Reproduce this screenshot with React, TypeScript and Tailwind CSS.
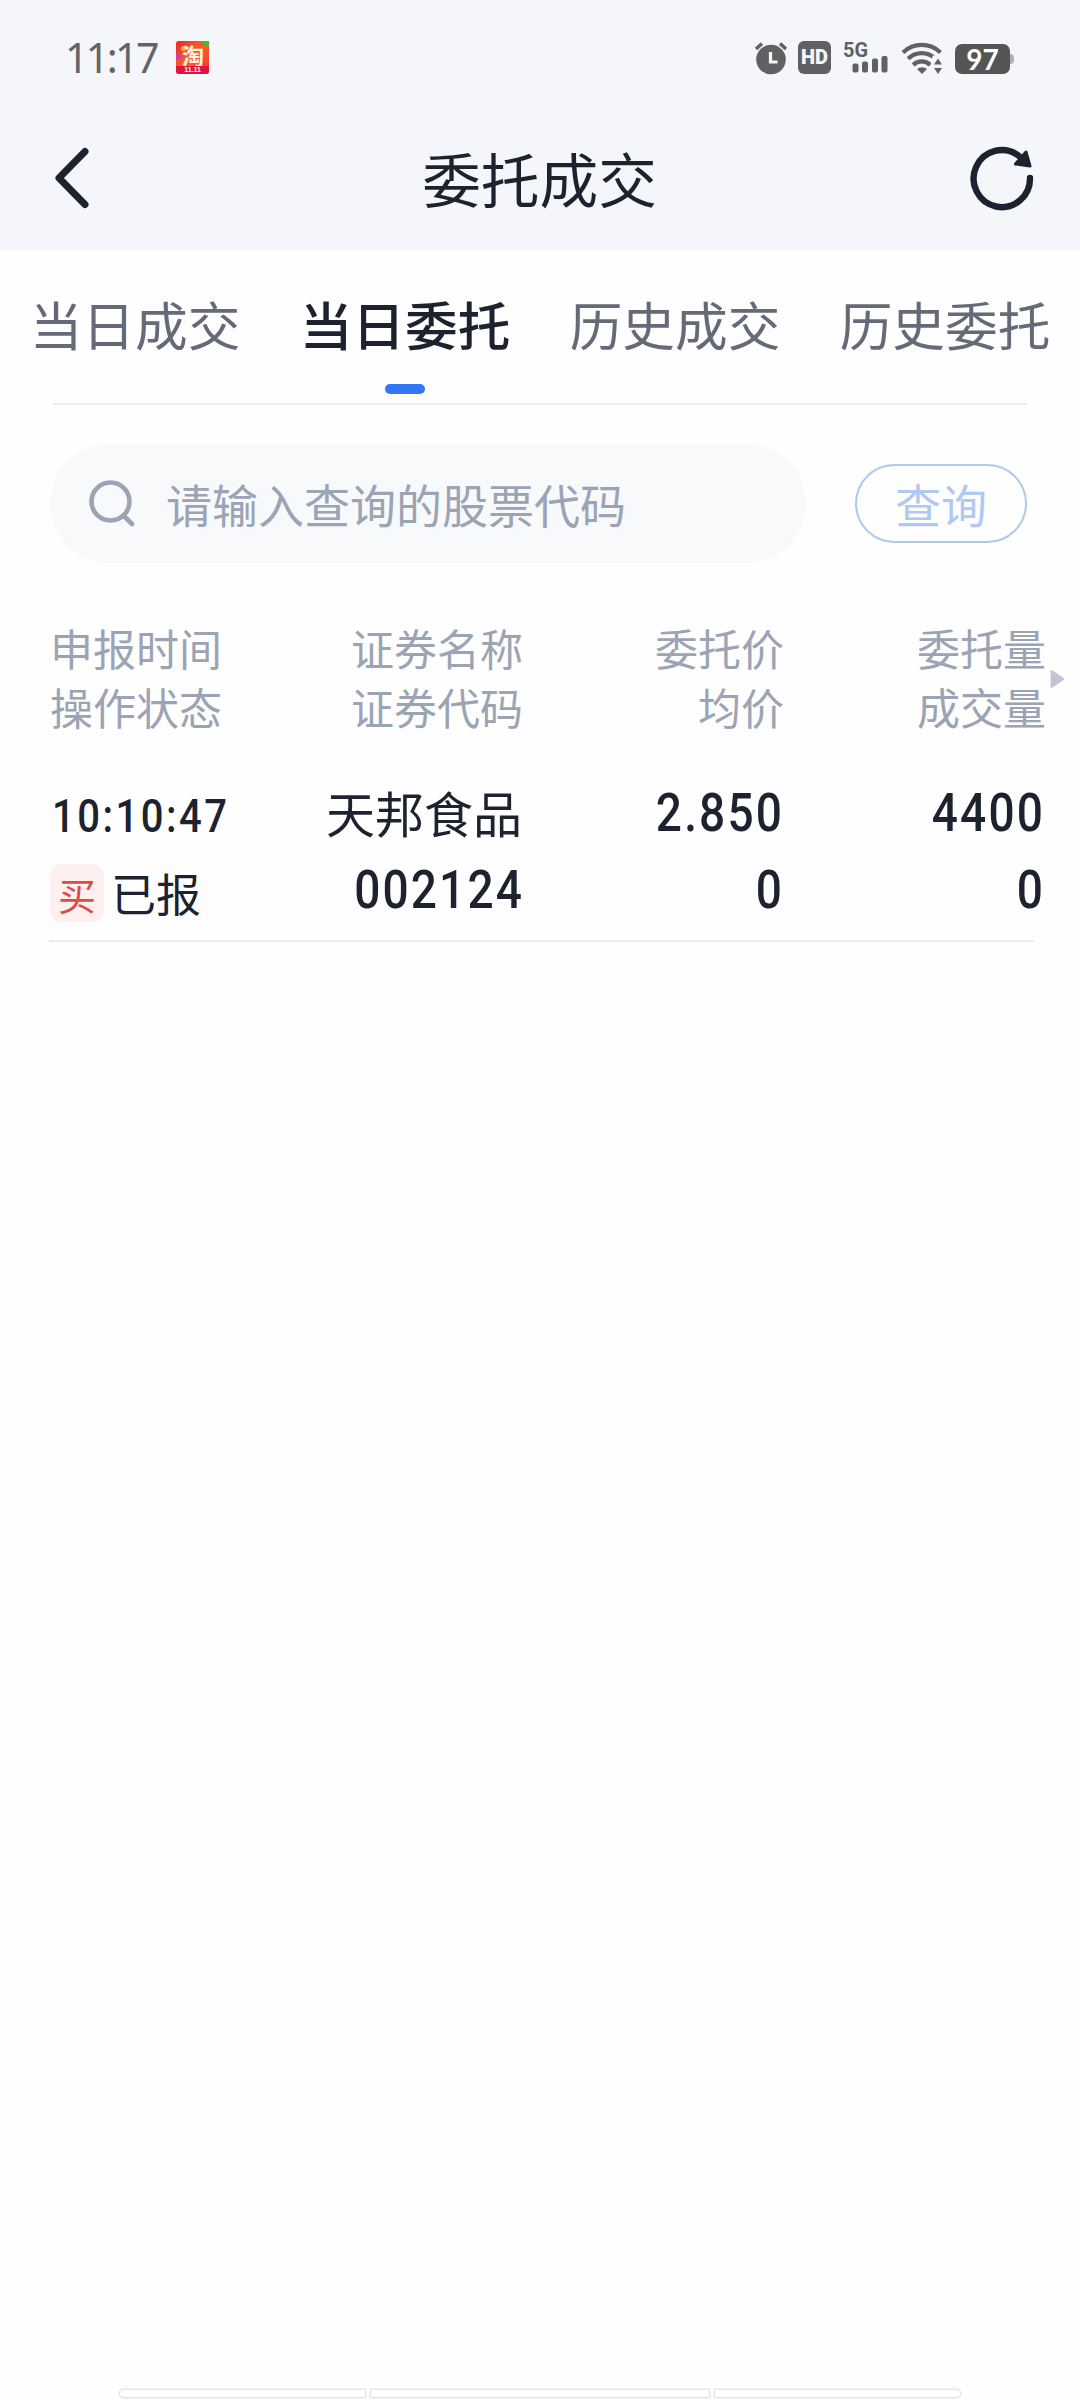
import clsx from "clsx";

const tabs = ["当日成交", "当日委托", "历史成交", "历史委托"];
const activeTab = "当日委托";

const columns = [
  ["申报时间", "操作状态"],
  ["证券名称", "证券代码"],
  ["委托价", "均价"],
  ["委托量", "成交量"],
];

const order = {
  time: "10:10:47",
  side: "买",
  status: "已报",
  name: "天邦食品",
  code: "002124",
  price: "2.850",
  avgPrice: "0",
  volume: "4400",
  filled: "0",
};

function AppBadge() {
  return (
    <div className="relative h-[33px] w-[33px] rounded-[3px] bg-linear-to-br from-[#e8202c] via-[#f8622a] to-[#f0203c]">
      <span className="absolute top-0 right-0 h-[5px] w-[7px] rounded-tr-[3px] rounded-bl-full bg-[#2fc22c]" />
      <span className="absolute top-[13px] left-0 h-[5px] w-[5px] rounded-full bg-[#c93bd8]" />
      <span className="absolute top-[5px] left-[5px] h-[5px] w-[5px] rounded-full bg-[#ffb02e]" />
      <span className="absolute top-[2px] left-[6px] text-[22px] leading-[22px] font-bold text-[#fff6e0]">淘</span>
      <span className="absolute bottom-0 left-0 h-[8px] w-full rounded-b-[3px] bg-[#e0123f] text-center font-['Liberation_Sans'] text-[7px] leading-[8px] font-bold text-white">
        11.11
      </span>
    </div>
  );
}

function AlarmIcon() {
  return (
    <svg width="34" height="34" viewBox="0 0 34 34" fill="none">
      <circle cx="17" cy="18.500" r="14.800" fill="#606163" />
      <path d="M2 8 8 2.500M32 8 26 2.500" stroke="#606163" strokeWidth="3.600" />
      <path d="M16.500 11v10h7" stroke="#f4f6fa" strokeWidth="3.200" />
    </svg>
  );
}

function SignalIcon() {
  return (
    <svg className="overflow-visible" width="46" height="34" viewBox="0 0 46 34" fill="#606163">
      <text x="-1" y="16" fontSize="21" fontWeight="700" fontFamily="Roboto, sans-serif" textLength="25" lengthAdjust="spacingAndGlyphs">
        5G
      </text>
      <rect x="8.500" y="22.500" width="6" height="9" rx="2" />
      <rect x="18" y="20.500" width="6" height="11" rx="2" />
      <rect x="28" y="17.500" width="6" height="14" rx="2" />
      <rect x="37.500" y="15" width="6" height="16.500" rx="2" />
    </svg>
  );
}

function WifiIcon() {
  return (
    <svg width="42" height="34" viewBox="0 0 42 34" fill="none">
      <g stroke="#606163" strokeWidth="4.200">
        <path d="M2 11.500a27 27 0 0 1 37.500 0" />
        <path d="M7.200 17.800a19 19 0 0 1 27 0" />
        <path d="M12.200 24a12 12 0 0 1 17 0" />
      </g>
      <path d="M16 28q5-3.600 10 0l-5 5z" fill="#606163" />
      <path d="M32 14.500h9V34h-11v-14z" fill="#f4f6fa" />
      <path d="M33 23.500 37 17.500l4 6zM33 27h8l-4 6z" fill="#606163" />
    </svg>
  );
}

function StatusBar() {
  return (
    <div className="flex h-[116px] items-start pt-[41px] pl-[65px]">
      <span className="w-[111px] font-['Noto_Sans'] text-[41px] leading-[33px] tracking-[-2.600px] text-[#646464]">11:17</span>
      <AppBadge />
      <div className="ml-[545px] flex items-start">
        <AlarmIcon />
        <span className="ml-[10px] h-[33px] w-[33px] rounded-[6px] bg-[#606163] text-center font-['Roboto'] text-[20px] leading-[33px] font-black text-[#f4f6fa]">
          HD
        </span>
        <span className="ml-[13px]">
          <SignalIcon />
        </span>
        <span className="ml-[11px]">
          <WifiIcon />
        </span>
        <span className="mt-[3px] ml-[12px] h-[30px] w-[55px] rounded-[7px] bg-[#555] text-center font-['Lato'] text-[28px] leading-[30px] font-bold text-white">
          97
        </span>
        <span className="mt-[13px] h-[10px] w-[4px] rounded-r-[4px] bg-[#b0b1b4]" />
      </div>
    </div>
  );
}

function Header() {
  return (
    <header className="h-[251px] bg-[#f4f6fa]">
      <StatusBar />
      <div className="flex h-[124px] items-center justify-between pr-[45px] pl-[53px]">
        <svg width="38" height="62" viewBox="0 0 38 62" fill="none">
          <path d="M32 4.500 6 31l26 26.500" stroke="#1c222e" strokeWidth="7" strokeLinecap="round" strokeLinejoin="round" />
        </svg>
        <h1 className="ml-[19px] text-[58.700px] leading-[60px]">委托成交</h1>
        <svg width="66" height="66" viewBox="0 0 66 66" fill="none">
          <path d="M61 33A28.200 28.500 0 1 1 50 11" stroke="#1c222e" strokeWidth="6.400" strokeLinecap="round" />
          <path d="M57 7 61 21 46.500 19z" fill="#1c222e" stroke="#1c222e" strokeWidth="3" strokeLinejoin="round" />
        </svg>
      </div>
    </header>
  );
}

function Tabs() {
  return (
    <nav className="h-[154px]">
      <div className="grid h-[152px] grid-cols-4 pt-[42px]">
        {tabs.map((tab) => (
          <div
            key={tab}
            className={clsx(
              "flex flex-col items-center text-[52.700px] leading-[60px]",
              tab === activeTab ? "font-medium" : "text-[#646a78]",
            )}
          >
            {tab}
            {tab === activeTab && <span className="mt-[31px] h-[10px] w-[40px] rounded-full bg-[#3078f6]" />}
          </div>
        ))}
      </div>
      <div className="mx-[53px] h-[2px] bg-[#ebebeb]" />
    </nav>
  );
}

function SearchBar() {
  return (
    <div className="mt-[39px] flex items-center pl-[50px]">
      <div className="flex h-[119px] w-[756px] items-center rounded-full bg-[#f8f9fb] pb-[2px] pl-[38px] text-[#9ba4b4]">
        <svg width="48" height="48" viewBox="0 0 48 48" fill="none" stroke="currentColor" strokeWidth="4.600" strokeLinecap="round">
          <circle cx="22.500" cy="22.500" r="19" />
          <path d="m36 37 8 8" />
        </svg>
        <span className="ml-[30px] text-[46px] leading-[60px]">请输入查询的股票代码</span>
      </div>
      <button className="ml-[49px] h-[79px] w-[172px] rounded-full border-2 border-[#b0c8ee] pb-[2px] text-[46px] leading-[70px] text-[#b0c9f3]">
        查询
      </button>
    </div>
  );
}

function ColumnHeads() {
  return (
    <div className="mt-[55px] grid grid-cols-[220px_253px_261px_262px_30px] pl-[50px] text-[43px] leading-[59px] text-[#9ba4b4]">
      {columns.map(([top, bottom], i) => (
        <div key={top} className={clsx(i > 0 && "text-right")}>
          <div>{top}</div>
          <div>{bottom}</div>
        </div>
      ))}
      <svg className="mt-[51px] ml-[4px]" width="15" height="20" viewBox="0 0 15 20">
        <path d="M1.500 2 13.500 10 1.500 18z" fill="#bfc5d3" stroke="#bfc5d3" strokeWidth="2" strokeLinejoin="round" />
      </svg>
    </div>
  );
}

function Num({ children }: { children: string }) {
  return (
    <div className="-mr-[2px] origin-right scale-x-[0.860] font-['Roboto'] text-[53.500px] leading-[77px] font-medium tracking-[2.500px]">
      {children}
    </div>
  );
}

function OrderRow() {
  return (
    <div className="mt-[38px] h-[168px]">
      <div className="grid h-[166px] grid-cols-[220px_252px_260px_261px] pl-[50px]">
        <div>
          <div className="ml-[2px] origin-left scale-x-[0.860] font-['Roboto'] text-[46.500px] leading-[85px] font-medium tracking-[2.900px]">
            {order.time}
          </div>
          <div className="mt-[5px] flex h-[58px] items-center">
            <span className="h-[58px] w-[54px] rounded-[12px] bg-[#fff0f0] text-center text-[38px] leading-[59px] text-[#dd4b45]">
              {order.side}
            </span>
            <span className="ml-[7px] text-[45px] leading-[62px]">{order.status}</span>
          </div>
        </div>
        <div className="text-right">
          <div className="h-[77px] text-[49px] leading-[75px]">{order.name}</div>
          <Num>{order.code}</Num>
        </div>
        <div className="text-right">
          <Num>{order.price}</Num>
          <Num>{order.avgPrice}</Num>
        </div>
        <div className="text-right">
          <Num>{order.volume}</Num>
          <Num>{order.filled}</Num>
        </div>
      </div>
      <div className="mr-[46px] ml-[49px] h-[2px] bg-[#ebebeb]" />
    </div>
  );
}

/** Three-segment gesture hint at the bottom edge. */
function GestureBar() {
  return (
    <div className="mt-auto mb-[3px] flex h-[7px] justify-center gap-[6px]">
      <span className="w-[245px] rounded-l-full bg-white shadow-[0_0_2px_1px_#d9d9d9]" />
      <span className="w-[338px] bg-white shadow-[0_0_2px_1px_#d9d9d9]" />
      <span className="w-[245px] rounded-r-full bg-white shadow-[0_0_2px_1px_#d9d9d9]" />
    </div>
  );
}

export default function App() {
  return (
    <div className="flex h-[2400px] w-[1080px] flex-col overflow-hidden bg-[#fefefe] font-['Noto_Sans_CJK_SC',sans-serif] text-[#1c222e]">
      <Header />
      <Tabs />
      <SearchBar />
      <ColumnHeads />
      <OrderRow />
      <GestureBar />
    </div>
  );
}
